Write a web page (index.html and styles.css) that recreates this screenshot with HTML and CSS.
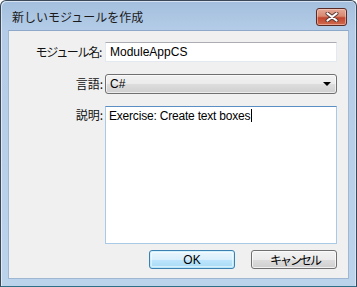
FILE: index.html
```html
<!DOCTYPE html>
<html lang="ja">
<head>
<meta charset="utf-8">
<link rel="stylesheet" href="styles.css">
</head>
<body>
<div class="window">
  <div class="titlebar">
    <span class="title">新しいモジュールを作成</span>
    <div class="close">
      <svg width="16" height="10" viewBox="0 0 16 10">
        <path d="M3.5 1.5 L12.5 8.5 M12.5 1.5 L3.5 8.5" stroke="#5a3a34" stroke-width="4" fill="none" stroke-linecap="round"/>
        <path d="M3.5 1.5 L12.5 8.5 M12.5 1.5 L3.5 8.5" stroke="#ffffff" stroke-width="2.2" fill="none" stroke-linecap="round"/>
      </svg>
    </div>
  </div>
  <div class="client">
    <div class="form">
      <label class="label kana">モジュール名:</label>
      <div class="input">ModuleAppCS</div>
      <label class="label">言語:</label>
      <div class="combo"><span>C#</span><span class="arrow"></span></div>
      <label class="label top">説明:</label>
      <div class="textarea">Exercise: Create text boxes<span class="caret"></span></div>
    </div>
    <div class="buttons">
      <div class="btn default">OK</div>
      <div class="btn kana-btn">キャンセル</div>
    </div>
  </div>
</div>
</body>
</html>
```

FILE: styles.css
```css
html, body {
  margin: 0;
  padding: 0;
  background: #ffffff;
}
body {
  font-family: "Liberation Sans", "Noto Sans CJK JP", sans-serif;
  font-size: 12px;
  color: #000;
}
.window {
  width: 357px;
  height: 287px;
  box-sizing: border-box;
  border: 1px solid #3a4858;
  border-bottom-color: #2f6f86;
  border-radius: 6px 6px 0 0;
  background: linear-gradient(to bottom, #a3bfdd 0px, #b4cce7 30px, #bcd3ec 100%);
  padding: 0 7px 7px 7px;
  display: flex;
  flex-direction: column;
  box-shadow: inset 1px 1px 0 rgba(255,255,255,0.55), inset -1px 0 0 rgba(255,255,255,0.4);
}
.titlebar {
  height: 29px;
  display: flex;
  align-items: center;
  justify-content: space-between;
  flex-shrink: 0;
}
.title {
  font-family: "Noto Sans CJK JP", sans-serif;
  font-size: 12px;
  color: #1a1a1a;
  margin-left: 4px;
  margin-top: 2px;
}
.close {
  width: 29px;
  height: 16px;
  margin-right: 2px;
  margin-top: 2px;
  border: 1px solid #5a2a24;
  border-radius: 3px;
  background: linear-gradient(to bottom, #e4a898 0%, #d88870 45%, #c2452e 55%, #cf6a4e 100%);
  box-shadow: inset 0 0 0 1px rgba(255,220,210,0.5);
  display: flex;
  align-items: center;
  justify-content: center;
}
.client {
  flex: 1;
  background: #f0f0f0;
  border: 1px solid #9fb7d2;
  border-top-color: #8da8c8;
  padding: 11px 11px 0 0;
  display: flex;
  flex-direction: column;
}
.form {
  display: grid;
  grid-template-columns: 94px 1fr;
  grid-template-rows: 20px 20px 138px;
  column-gap: 2px;
  row-gap: 12px;
}
.label {
  font-family: "Noto Sans CJK JP", sans-serif;
  font-size: 12px;
  color: #111;
  display: flex;
  align-items: center;
  justify-content: flex-end;
  line-height: 1;
}
.label.kana {
  letter-spacing: -1.3px;
  padding-right: 2px;
}
.label.top {
  align-items: flex-start;
  padding-top: 3px;
}
.input {
  box-sizing: border-box;
  background: #fff;
  border: 1px solid #e3e9ef;
  border-top-color: #abadb3;
  padding: 0 4px;
  display: flex;
  align-items: center;
}
.combo {
  box-sizing: border-box;
  border: 1px solid #707070;
  border-radius: 3px;
  background: linear-gradient(to bottom, #f2f2f2 0%, #ebebeb 50%, #dddddd 51%, #cfcfcf 100%);
  box-shadow: inset 0 0 0 1px rgba(255,255,255,0.6);
  padding: 0 5px 0 4px;
  display: flex;
  align-items: center;
  justify-content: space-between;
}
.arrow {
  width: 0;
  height: 0;
  border-left: 4px solid transparent;
  border-right: 4px solid transparent;
  border-top: 4px solid #000;
}
.textarea {
  box-sizing: border-box;
  background: #fff;
  border: 1px solid #a9c9e6;
  border-top-color: #5b8fc4;
  padding: 2px 3px;
  line-height: 14px;
  letter-spacing: -0.2px;
}
.caret {
  display: inline-block;
  width: 1px;
  height: 13px;
  background: #000;
  vertical-align: -2px;
  margin-left: 1px;
}
.buttons {
  display: flex;
  justify-content: flex-end;
  gap: 16px;
  margin-top: 6px;
}
.btn {
  box-sizing: border-box;
  width: 86px;
  height: 19px;
  border: 1px solid #707070;
  border-radius: 3px;
  background: linear-gradient(to bottom, #f2f2f2 0%, #ebebeb 50%, #dddddd 51%, #cfcfcf 100%);
  box-shadow: inset 0 0 0 1px rgba(255,255,255,0.7);
  display: flex;
  align-items: center;
  justify-content: center;
  font-family: "Noto Sans CJK JP", sans-serif;
  font-size: 12px;
  line-height: 1;
}
.btn.kana-btn {
  letter-spacing: -2px;
  padding-left: 2px;
}
.btn.default {
  border-color: #3c7fb1;
  background: linear-gradient(to bottom, #eaf6fd 0%, #d9f0fc 50%, #bee6fd 51%, #a7d9f5 100%);
  box-shadow: inset 0 0 0 1px rgba(72,216,251,0.2), inset 0 0 0 2px rgba(255,255,255,0.5);
  font-family: "Liberation Sans", sans-serif;
}
```
